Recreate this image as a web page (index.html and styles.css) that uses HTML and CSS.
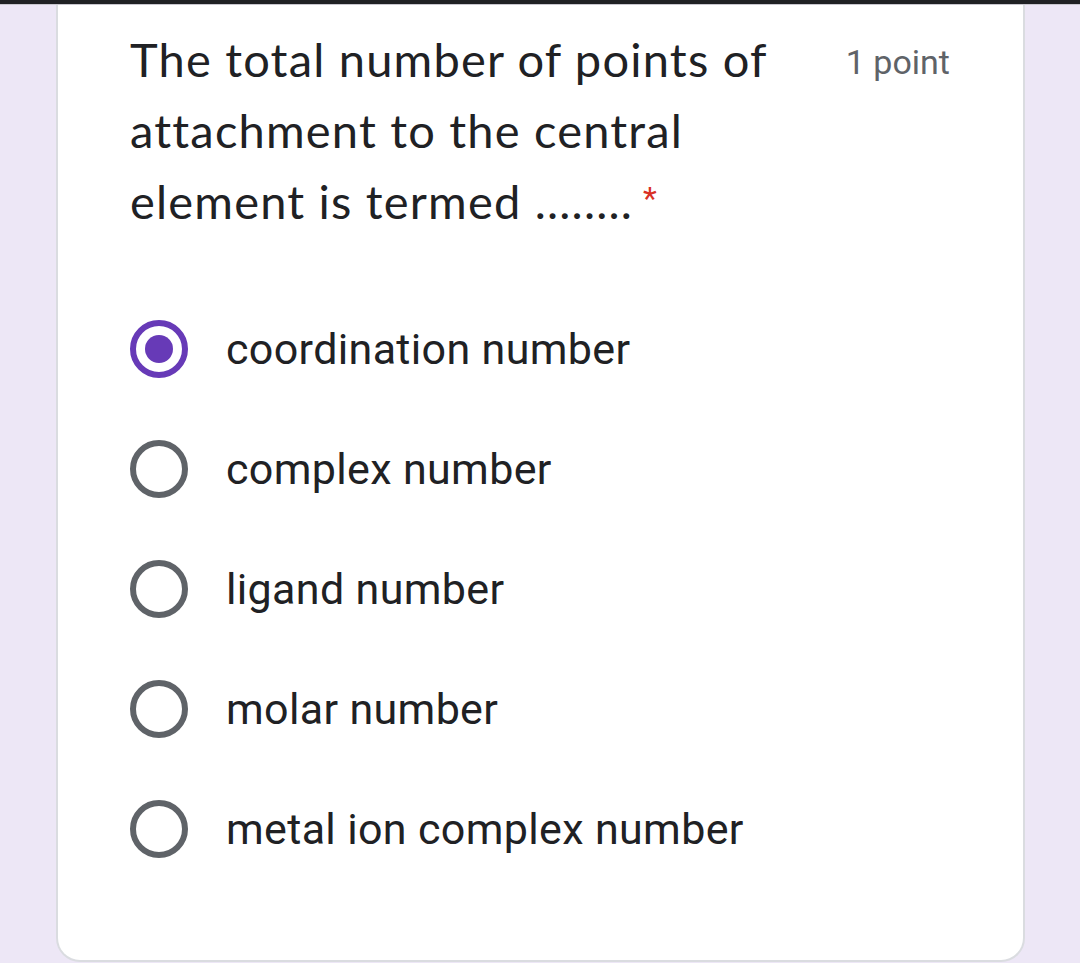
FILE: index.html
```html
<!DOCTYPE html>
<html>
<head>
<meta charset="utf-8">
<link rel="stylesheet" href="styles.css">
</head>
<body>
<div class="topbar"></div>
<div class="card">
  <div class="head">
    <div class="title">The total number of points of attachment to the central element is termed ........<span class="req">*</span></div>
    <div class="points">1 point</div>
  </div>
  <div class="options">
    <label class="opt"><span class="radio checked"><span class="dot"></span></span><span class="lbl">coordination number</span></label>
    <label class="opt"><span class="radio"></span><span class="lbl">complex number</span></label>
    <label class="opt"><span class="radio"></span><span class="lbl">ligand number</span></label>
    <label class="opt"><span class="radio"></span><span class="lbl">molar number</span></label>
    <label class="opt"><span class="radio"></span><span class="lbl">metal ion complex number</span></label>
  </div>
</div>
</body>
</html>
```
FILE: styles.css
```css
html, body {
  margin: 0;
  padding: 0;
}
body {
  background: #ede7f6;
  width: 1080px;
  height: 963px;
  overflow: hidden;
  font-family: Roboto, "Liberation Sans", sans-serif;
}
.topbar {
  height: 4px;
  background: #202124;
  border-bottom: 1px solid #c9c7cf;
}
.card {
  margin-left: 56px;
  width: 969px;
  height: 957px;
  box-sizing: border-box;
  background: #fff;
  border: 2px solid #dadce0;
  border-top: none;
  border-radius: 0 0 24px 24px;
  padding: 19px 72px 0 72px;
}
.head {
  display: flex;
  justify-content: space-between;
  align-items: flex-start;
}
.title {
  width: 690px;
  font-family: Lato, "Open Sans", sans-serif;
  font-size: 47px;
  line-height: 71px;
  color: #202124;
  letter-spacing: 1.2px;
}
.req {
  color: #d93025;
  font-size: 32px;
  line-height: 0;
  vertical-align: 10px;
  padding-left: 10px;
  font-family: Roboto, sans-serif;
}
.points {
  font-size: 34px;
  line-height: 40px;
  color: #5f6368;
  margin-top: 18px;
  margin-right: 1px;
}
.options {
  display: flex;
  flex-direction: column;
  margin-top: 52px;
}
.opt {
  display: flex;
  align-items: center;
  height: 120px;
}
.radio {
  width: 58px;
  height: 58px;
  box-sizing: border-box;
  border: 6px solid #5f6368;
  border-radius: 50%;
  display: flex;
  align-items: center;
  justify-content: center;
  flex: none;
}
.radio.checked {
  border-color: #673ab7;
}
.dot {
  width: 28px;
  height: 28px;
  border-radius: 50%;
  background: #673ab7;
}
.lbl {
  margin-left: 38px;
  font-size: 43px;
  letter-spacing: 0.35px;
  color: #202124;
}
```
